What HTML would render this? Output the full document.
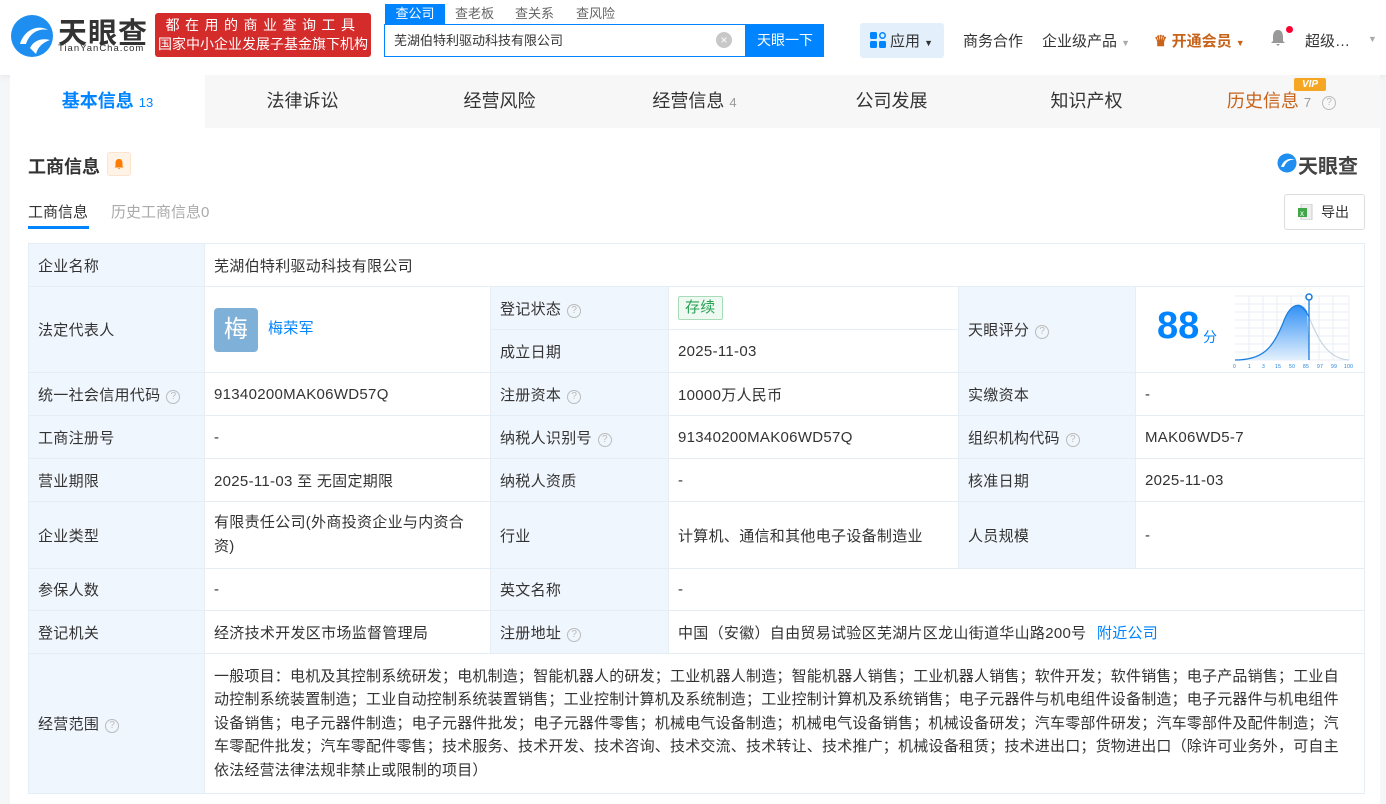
<!DOCTYPE html>
<html><head><meta charset="utf-8"><style>
*{box-sizing:border-box;margin:0;padding:0}
body{width:1386px;height:804px;overflow:hidden;background:#f5f6f8;font-family:"Liberation Sans","Noto Sans CJK SC",sans-serif;color:#333;position:relative}
.a{position:absolute}
.hdr{left:0;top:0;width:1386px;height:75px;background:#fff;box-shadow:0 2px 6px rgba(0,0,0,.06)}
.card{left:10px;top:75px;width:1370px;height:729px;background:#fff}
.tabs{left:10px;top:75px;width:1370px;height:53px;background:#f7f7f7}
.tab{position:absolute;top:75px;height:53px;line-height:53px;font-size:18px;color:#333;text-align:center}
table{position:absolute;left:28px;top:243px;border-collapse:collapse;font-size:15px;letter-spacing:0.3px;table-layout:fixed}
td{border:1px solid #e5edf5;padding:0 9px;color:#333;vertical-align:middle}
td.l{background:#f0f6fd}
.q{display:inline-block;width:14px;height:14px;border:1px solid #bbb;border-radius:50%;font-size:10px;line-height:12px;text-align:center;color:#bbb;margin-left:6px;vertical-align:1px;letter-spacing:0}
.blue{color:#0084ff}
</style></head><body>
<div class="a hdr"></div>
<svg class="a" style="left:10px;top:14px" width="44" height="44" viewBox="0 0 44 44"><circle cx="22" cy="22" r="21" fill="#1e8ff0"/><path d="M10 30 C14 16 28 10 38 16 C30 14 20 18 16 30 Z" fill="#fff"/><path d="M20 34 C24 26 32 24 40 26 C34 28 28 32 26 40Z" fill="#fff"/></svg>
<div class="a" style="left:58px;top:10px;font-size:29px;font-weight:bold;color:#333;letter-spacing:1px">天眼查</div>
<div class="a" style="left:58px;top:43px;font-size:9.5px;color:#333;letter-spacing:1px">TianYanCha.com</div>
<div class="a" style="left:155px;top:13px;width:216px;height:44px;background:#d42b2b;border-radius:3px;color:#fff;font-size:14px;text-align:center;line-height:19px;padding-top:3px"><div style="letter-spacing:5.5px">都在用的商业查询工具</div><div>国家中小企业发展子基金旗下机构</div></div>
<div class="a" style="left:385px;top:4px;width:60px;height:20px;background:#0084ff;color:#fff;font-size:13px;text-align:center;line-height:20px">查公司</div>
<div class="a" style="left:455px;top:4px;font-size:13px;color:#666;line-height:20px">查老板</div>
<div class="a" style="left:515px;top:4px;font-size:13px;color:#666;line-height:20px">查关系</div>
<div class="a" style="left:576px;top:4px;font-size:13px;color:#666;line-height:20px">查风险</div>
<div class="a" style="left:384px;top:24px;width:362px;height:33px;border:1px solid #0084ff;background:#fff;font-size:13px;line-height:31px;padding-left:9px">芜湖伯特利驱动科技有限公司</div>
<div class="a" style="left:716px;top:32px;width:16px;height:16px;border-radius:50%;background:#c8c8c8;color:#fff;font-size:12px;line-height:16px;text-align:center">×</div>
<div class="a" style="left:746px;top:24px;width:78px;height:33px;background:#0084ff;color:#fff;font-size:14px;line-height:33px;text-align:center">天眼一下</div>
<div class="a" style="left:860px;top:23px;width:84px;height:35px;background:#e3effb;border-radius:3px"></div>
<svg class="a" style="left:870px;top:32px" width="16" height="16"><rect x="0" y="0" width="7" height="7" rx="1.5" fill="#0084ff"/><rect x="9" y="9" width="7" height="7" rx="1.5" fill="#0084ff"/><rect x="0" y="9" width="7" height="7" rx="1.5" fill="#0084ff"/><circle cx="12.5" cy="3.5" r="2.7" fill="none" stroke="#0084ff" stroke-width="1.5"/></svg>
<div class="a" style="left:890px;top:30px;font-size:15px;color:#333">应用 <span style="font-size:9px">▼</span></div>
<div class="a" style="left:963px;top:30px;font-size:15px;color:#333">商务合作</div>
<div class="a" style="left:1042px;top:30px;font-size:15px;color:#333">企业级产品 <span style="font-size:9px;color:#aaa">▼</span></div>
<div class="a" style="left:1154px;top:30px;font-size:15px;color:#c8631a;font-weight:bold">♛ 开通会员 <span style="font-size:9px">▼</span></div>
<div class="a" style="left:1270px;top:29px;width:16px;height:18px;"><svg width="16" height="18"><path d="M8 1 C4 1 3 5 3 8 L3 12 L1 14 L15 14 L13 12 L13 8 C13 5 12 1 8 1Z M6 15 L10 15 L8 17Z" fill="#999"/></svg></div>
<div class="a" style="left:1286px;top:26px;width:7px;height:7px;border-radius:50%;background:#f03"></div>
<div class="a" style="left:1305px;top:30px;font-size:15px;color:#333">超级…</div>
<div class="a" style="left:1368px;top:34px;font-size:9px;color:#aaa">▼</div>

<div class="a card"></div>
<div class="a tabs"></div>
<div class="a" style="left:10px;top:75px;width:195px;height:53px;background:#fff"></div>
<div class="tab" style="left:10px;width:195px;color:#0084ff;font-weight:bold">基本信息 <span style="font-weight:normal;font-size:13px">13</span></div>
<div class="tab" style="left:205px;width:195px">法律诉讼</div>
<div class="tab" style="left:402px;width:195px">经营风险</div>
<div class="tab" style="left:597px;width:195px">经营信息 <span style="font-size:13px;color:#999">4</span></div>
<div class="tab" style="left:794px;width:195px">公司发展</div>
<div class="tab" style="left:989px;width:195px">知识产权</div>
<div class="tab" style="left:1184px;width:195px;color:#c8631a">历史信息 <span style="font-size:13px;color:#999">7</span> <span class="q" style="vertical-align:2px">?</span></div>
<div class="a" style="left:1294px;top:78px;width:32px;height:13px;background:#f5a623;color:#fff;font-size:10px;font-style:italic;font-weight:bold;line-height:13px;text-align:center;border-radius:2px">VIP</div>

<div class="a" style="left:28px;top:153px;font-size:18px;font-weight:bold;color:#333">工商信息</div>
<div class="a" style="left:107px;top:152px;width:24px;height:24px;background:#fff3e8;border:1px solid #fde3cc;border-radius:3px"><svg width="22" height="22"><path d="M11 6 C8 6 7.5 8.5 7.5 10.5 L7.5 13.5 L6.5 14.5 L15.5 14.5 L14.5 13.5 L14.5 10.5 C14.5 8.5 14 6 11 6Z M10 15 L12 15 L11 16.5Z" fill="#ff7a00"/></svg></div>
<svg class="a" style="left:1277px;top:153px" width="20" height="20"><circle cx="10" cy="10" r="9.5" fill="#1e8ff0"/><path d="M4 14 C6 7 13 4 18 7 C14 6 9 8 7 14Z" fill="#fff"/></svg>
<div class="a" style="left:1298px;top:150px;font-size:20px;font-weight:bold;color:#444">天眼查</div>
<div class="a" style="left:28px;top:201px;font-size:15px;color:#333">工商信息</div>
<div class="a" style="left:28px;top:226px;width:61px;height:3px;background:#0084ff"></div>
<div class="a" style="left:111px;top:201px;font-size:15px;color:#aaa">历史工商信息0</div>
<div class="a" style="left:1284px;top:194px;width:81px;height:36px;border:1px solid #ddd;border-radius:3px;font-size:14px;line-height:34px;padding-left:36px">导出</div>
<svg class="a" style="left:1298px;top:204px" width="15" height="16"><rect x="3" y="0" width="11" height="16" fill="#eee" stroke="#ccc"/><rect x="0" y="4" width="9" height="9" fill="#3fa64a"/><text x="2" y="12" font-size="8" fill="#fff" font-family="Liberation Sans">x</text></svg>

<table>
<colgroup><col style="width:176px"><col style="width:286px"><col style="width:178px"><col style="width:290px"><col style="width:177px"><col style="width:229px"></colgroup>
<tr style="height:43px"><td class="l">企业名称</td><td colspan="5">芜湖伯特利驱动科技有限公司</td></tr>
<tr style="height:43px"><td class="l" rowspan="2">法定代表人</td><td rowspan="2"><span style="display:inline-block;width:44px;height:44px;background:#7fb0d8;border-radius:4px;color:#fff;font-size:24px;text-align:center;line-height:44px;vertical-align:middle">梅</span><span class="blue" style="margin-left:10px">梅荣军</span></td><td class="l">登记状态<span class="q">?</span></td><td><span style="display:inline-block;border:1px solid #a8dcb8;background:#eefaf1;color:#2aa356;padding:0 6px;line-height:22px;border-radius:2px">存续</span></td><td class="l" rowspan="2">天眼评分<span class="q">?</span></td><td rowspan="2" style="position:relative"><span style="position:absolute;left:21px;top:18px;font-size:38px;font-weight:bold;color:#0084ff;letter-spacing:0">88</span><span style="position:absolute;left:67px;top:40px;font-size:14px;color:#0084ff">分</span>
<svg style="position:absolute;left:97px;top:6px" width="122" height="76" viewBox="0 0 122 76"><defs><linearGradient id="g" x1="0" y1="0" x2="0" y2="1"><stop offset="0" stop-color="#2f8ff5"/><stop offset="1" stop-color="#e3f0fd"/></linearGradient></defs>
<g stroke="#eaeef3" stroke-width="1"><path d="M2 3H116M2 11H116M2 19H116M2 27H116M2 35H116M2 43H116M2 51H116M2 59H116M2 67H116M16 3V67M30 3V67M44 3V67M58 3V67M72 3V67M86 3V67M100 3V67M116 3V67"/></g>
<path d="M2 67 C30 67 40 55 50 30 C58 8 68 8 74 18 L76 52 L76 67Z" fill="url(#g)"/>
<path d="M2 67 C30 67 40 55 50 30 C58 8 68 8 76 24" fill="none" stroke="#1a7ddd" stroke-width="1.2"/>
<path d="M76 24 C84 44 94 66 116 67" fill="none" stroke="#c8d6e4" stroke-width="1.2"/>
<line x1="76" y1="4" x2="76" y2="67" stroke="#1a7ddd" stroke-width="1.3"/><circle cx="76" cy="4" r="3" fill="#fff" stroke="#1a7ddd" stroke-width="1.5"/>
<g font-size="5" fill="#1a7ddd" font-family="Liberation Sans"><text x="0" y="75">0</text><text x="15" y="75">1</text><text x="29" y="75">3</text><text x="42" y="75">15</text><text x="56" y="75">50</text><text x="70" y="75">85</text><text x="84" y="75">97</text><text x="98" y="75">99</text><text x="111" y="75">100</text></g></svg></td></tr>
<tr style="height:43px"><td class="l">成立日期</td><td>2025-11-03</td></tr>
<tr style="height:43px"><td class="l">统一社会信用代码<span class="q">?</span></td><td>91340200MAK06WD57Q</td><td class="l">注册资本<span class="q">?</span></td><td>10000万人民币</td><td class="l">实缴资本</td><td>-</td></tr>
<tr style="height:43px"><td class="l">工商注册号</td><td>-</td><td class="l">纳税人识别号<span class="q">?</span></td><td>91340200MAK06WD57Q</td><td class="l">组织机构代码<span class="q">?</span></td><td>MAK06WD5-7</td></tr>
<tr style="height:43px"><td class="l">营业期限</td><td>2025-11-03 至 无固定期限</td><td class="l">纳税人资质</td><td>-</td><td class="l">核准日期</td><td>2025-11-03</td></tr>
<tr style="height:67px"><td class="l">企业类型</td><td style="line-height:24px">有限责任公司(外商投资企业与内资合<br>资)</td><td class="l">行业</td><td>计算机、通信和其他电子设备制造业</td><td class="l">人员规模</td><td>-</td></tr>
<tr style="height:42px"><td class="l">参保人数</td><td>-</td><td class="l">英文名称</td><td colspan="3">-</td></tr>
<tr style="height:43px"><td class="l">登记机关</td><td>经济技术开发区市场监督管理局</td><td class="l">注册地址<span class="q">?</span></td><td colspan="3">中国（安徽）自由贸易试验区芜湖片区龙山街道华山路200号 <span class="blue" style="margin-left:6px">附近公司</span></td></tr>
<tr style="height:140px"><td class="l">经营范围<span class="q">?</span></td><td colspan="5" style="line-height:23.5px;white-space:nowrap;letter-spacing:0.2px">一般项目：电机及其控制系统研发；电机制造；智能机器人的研发；工业机器人制造；智能机器人销售；工业机器人销售；软件开发；软件销售；电子产品销售；工业自<br>动控制系统装置制造；工业自动控制系统装置销售；工业控制计算机及系统制造；工业控制计算机及系统销售；电子元器件与机电组件设备制造；电子元器件与机电组件<br>设备销售；电子元器件制造；电子元器件批发；电子元器件零售；机械电气设备制造；机械电气设备销售；机械设备研发；汽车零部件研发；汽车零部件及配件制造；汽<br>车零配件批发；汽车零配件零售；技术服务、技术开发、技术咨询、技术交流、技术转让、技术推广；机械设备租赁；技术进出口；货物进出口（除许可业务外，可自主<br>依法经营法律法规非禁止或限制的项目）</td></tr>
</table>
</body></html>
